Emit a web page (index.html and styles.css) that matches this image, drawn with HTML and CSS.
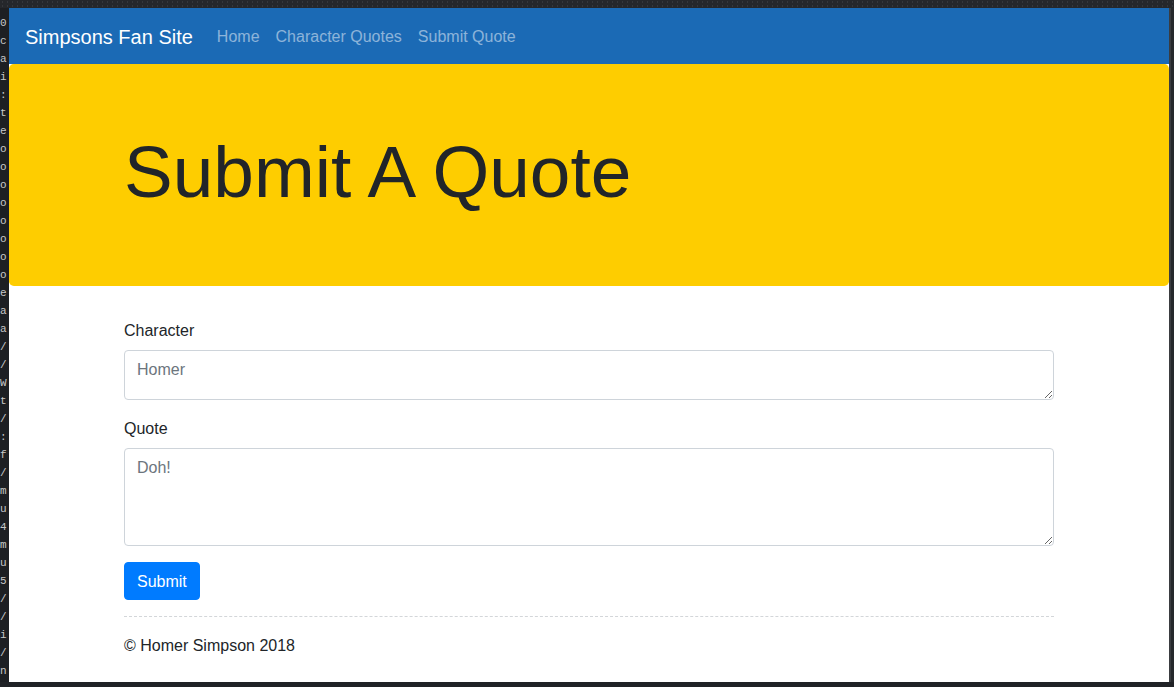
FILE: index.html
```html
<!DOCTYPE html>
<html lang="en">
<head>
<meta charset="utf-8">
<title>Simpsons Fan Site</title>
<link rel="stylesheet" href="styles.css">
</head>
<body>
<div class="topbar"></div>
<div class="screen">
  <div class="term">
    <span>0</span><span>c</span><span>a</span><span>i</span><span>:</span><span>t</span><span>e</span><span>o</span><span>o</span><span>o</span><span>o</span><span>o</span><span>o</span><span>o</span><span>o</span><span>e</span><span>a</span><span>a</span><span>/</span><span>/</span><span>W</span><span>t</span><span>/</span><span>:</span><span>f</span><span>/</span><span>m</span><span>u</span><span>4</span><span>m</span><span>u</span><span>5</span><span>/</span><span>/</span><span>i</span><span>/</span><span>n</span>
  </div>
  <div class="window">
    <nav class="navbar">
      <a class="brand" href="#">Simpsons Fan Site</a>
      <ul class="nav">
        <li><a class="nav-link" href="#">Home</a></li>
        <li><a class="nav-link" href="#">Character Quotes</a></li>
        <li><a class="nav-link" href="#">Submit Quote</a></li>
      </ul>
    </nav>
    <header class="jumbotron">
      <div class="container">
        <h1 class="display">Submit A Quote</h1>
      </div>
    </header>
    <main class="container">
      <form class="quote-form">
        <div class="form-group">
          <label class="label" for="character">Character</label>
          <textarea id="character" class="form-control field-sm" placeholder="Homer"></textarea>
        </div>
        <div class="form-group">
          <label class="label" for="quote">Quote</label>
          <textarea id="quote" class="form-control field-lg" placeholder="Doh!"></textarea>
        </div>
        <button type="button" class="btn">Submit</button>
      </form>
      <hr class="divider">
      <footer class="footer">© Homer Simpson 2018</footer>
    </main>
  </div>
  <div class="edge"></div>
</div>
<div class="bottombar"></div>
</body>
</html>
```
FILE: styles.css
```css
* { box-sizing: border-box; }

html, body {
  margin: 0;
  padding: 0;
  background: #23252a;
  height: 687px;
  overflow: hidden;
  font-family: "Liberation Sans", Arial, sans-serif;
}

.topbar {
  height: 8px;
  background: #25272b;
  background-image: radial-gradient(#35373c 0.8px, transparent 1px);
  background-size: 5px 4px;
}

.screen {
  display: flex;
  height: 674px;
}

.term {
  width: 9px;
  flex: none;
  overflow: hidden;
  display: flex;
  flex-direction: column;
  padding-top: 6px;
  font-family: "Liberation Mono", monospace;
  font-size: 11px;
  line-height: 18px;
  color: #c8c8c8;
  background: #1d1f23;
}

.term span {
  display: block;
  width: 8px;
}

.window {
  width: 1160px;
  flex: none;
  background: #fff;
  display: flex;
  flex-direction: column;
  overflow: hidden;
}

.edge {
  flex: 1;
  background: #26282c;
  border-left: 2px solid #3a3c40;
}

.bottombar {
  height: 5px;
  background: #202226;
}

.navbar {
  height: 56px;
  flex: none;
  background: #1b6ab5;
  display: flex;
  align-items: center;
  padding: 9px 16px 7px;
}

.brand {
  color: #fff;
  font-size: 20px;
  line-height: 30px;
  text-decoration: none;
  margin-right: 16px;
}

.nav {
  list-style: none;
  display: flex;
  margin: 0;
  padding: 0;
}

.nav-link {
  display: block;
  padding: 8px 8px;
  color: rgba(255, 255, 255, 0.5);
  font-size: 16px;
  line-height: 24px;
  text-decoration: none;
}

.jumbotron {
  background: #fecd00;
  padding: 64px 0;
  border-radius: 4.8px;
  margin-bottom: 32px;
  flex: none;
}

.container {
  width: 960px;
  margin: 0 auto;
  padding: 0 15px;
}

.display {
  margin: 0 0 8px;
  padding-top: 1px;
  height: 86px;
  font-size: 73px;
  font-weight: 300;
  line-height: 86px;
  color: #212529;
}

.form-group {
  margin-bottom: 16px;
}

.label {
  display: block;
  padding-top: 1px;
  margin-bottom: 7px;
  font-size: 16px;
  line-height: 24px;
  color: #212529;
}

.form-control {
  display: block;
  width: 100%;
  padding: 7px 12px 5px;
  font-family: "Liberation Sans", Arial, sans-serif;
  font-size: 16px;
  line-height: 24px;
  color: #495057;
  background: #fff;
  border: 1px solid #ced4da;
  border-radius: 4px;
  margin: 0;
}

.form-control::placeholder {
  color: #6c757d;
  opacity: 1;
}

.field-sm { height: 50px; }
.field-lg { height: 98px; }

.btn {
  display: block;
  height: 38px;
  padding: 7px 12px 5px;
  font-family: "Liberation Sans", Arial, sans-serif;
  font-size: 16px;
  line-height: 24px;
  color: #fff;
  background: #007bff;
  border: 1px solid #007bff;
  border-radius: 4px;
}

.divider {
  margin: 16px 0;
  border: 0;
  border-top: 1px dashed #d3d6d9;
  height: 0;
}

.footer {
  padding-top: 1px;
  font-size: 16px;
  line-height: 24px;
  color: #212529;
}
```
